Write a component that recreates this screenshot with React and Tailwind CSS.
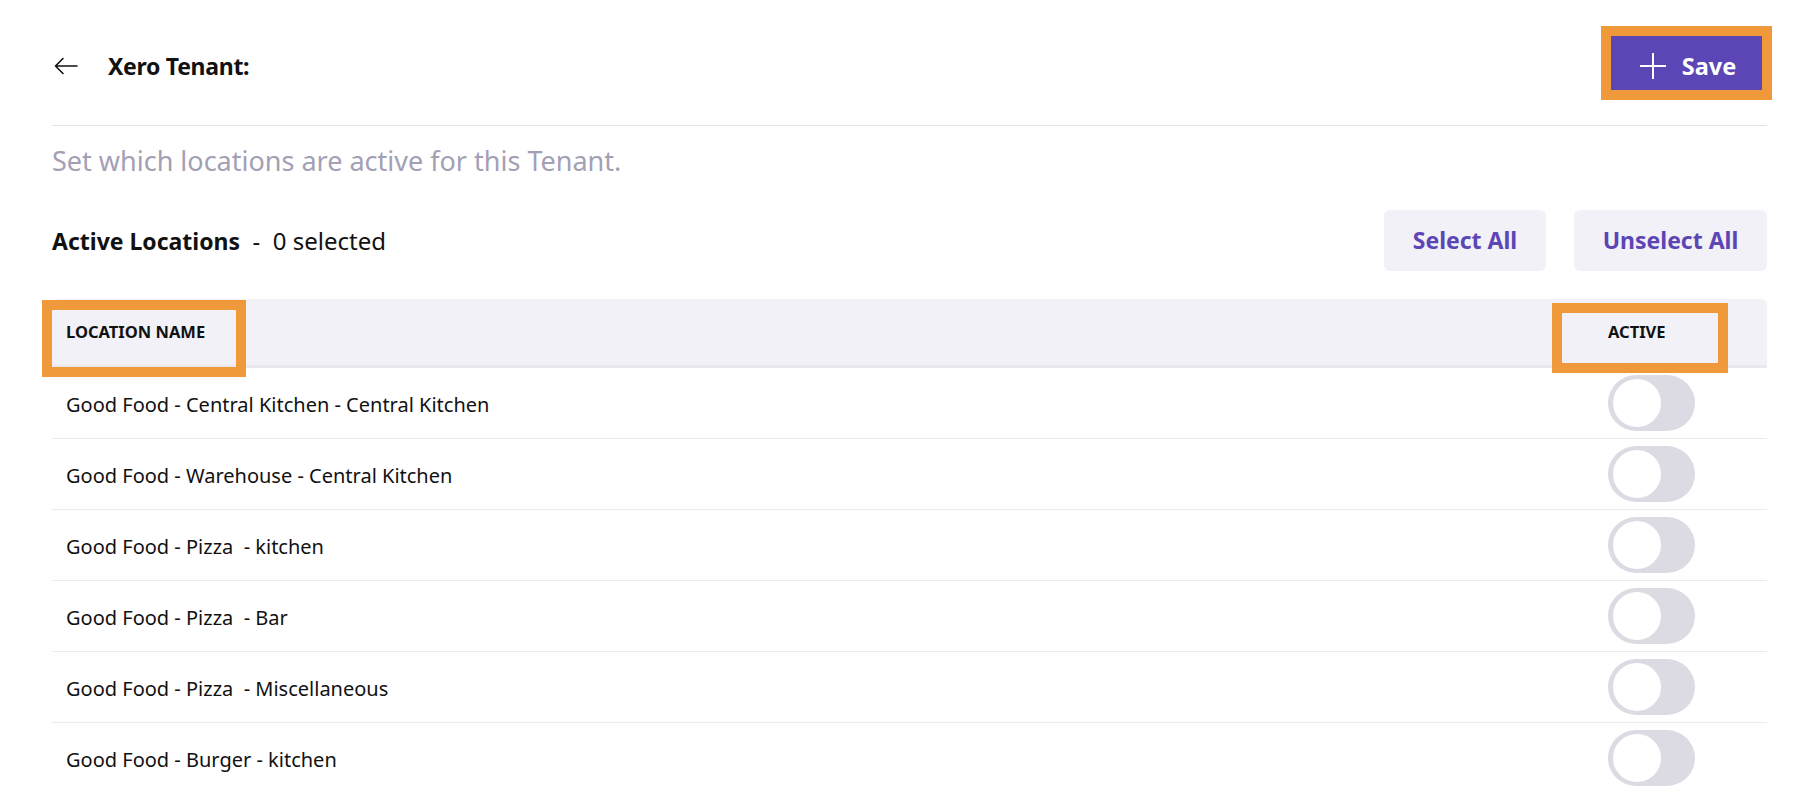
import React from "react";

const rows = [
  "Good Food - Central Kitchen - Central Kitchen",
  "Good Food - Warehouse - Central Kitchen",
  "Good Food - Pizza  - kitchen",
  "Good Food - Pizza  - Bar",
  "Good Food - Pizza  - Miscellaneous",
  "Good Food - Burger - kitchen",
];

function Toggle() {
  return (
    <div className="relative h-[56px] w-[87px] rounded-full bg-[#dcdbe4]">
      <div className="absolute left-[5px] top-[4px] h-[48px] w-[48px] rounded-full bg-white" />
    </div>
  );
}

export default function App() {
  return (
    <div
      className="min-h-screen w-full bg-white pl-[52px] pr-[49px] text-[#111111]"
      style={{ fontFamily: '"Noto Sans", "Open Sans", sans-serif' }}
    >
      <div className="flex items-center justify-between pt-[36px]">
        <div className="mt-[6px] flex items-center">
          <svg width="24" height="18" viewBox="0 0 24 18" fill="none" className="ml-[2px]">
            <path d="M23 9H1.5M9 1.5L1.5 9L9 16.5" stroke="#111" strokeWidth="1.6" strokeLinecap="round" strokeLinejoin="round" />
          </svg>
          <span className="ml-[30px] text-[23px] font-bold tracking-[-0.3px]">Xero Tenant:</span>
        </div>
        <button className="mr-[5px] flex h-[54px] w-[151px] items-center justify-center gap-[15px] bg-[#5c45b5] pl-[2px] pt-[6px] text-white outline-[10px] outline-solid outline-[#f0993a]">
          <svg width="28" height="28" viewBox="0 0 28 28" fill="none">
            <path d="M14 1V27M1 14H27" stroke="white" strokeWidth="2" />
          </svg>
          <span className="text-[23.5px] font-bold leading-[28px]">Save</span>
        </button>
      </div>
      <div className="mt-[35px] h-px bg-[#e2e2e6]" />
      <p className="mt-[19px] text-[27px] leading-[32px] text-[#a3a0b5]">
        Set which locations are active for this Tenant.
      </p>
      <div className="mt-[33px] flex items-center justify-between">
        <div className="whitespace-pre text-[23px]">
          <span className="font-bold">Active Locations</span>
          <span className="text-[24px]">{"  -  0 selected"}</span>
        </div>
        <div className="flex gap-[28px]">
          <button className="h-[61px] w-[162px] rounded-[6px] bg-[#f2f1f7] text-[23px] font-bold text-[#5c45b5]">
            Select All
          </button>
          <button className="h-[61px] w-[193px] rounded-[6px] bg-[#f2f1f7] text-[23px] font-bold text-[#5c45b5]">
            Unselect All
          </button>
        </div>
      </div>
      <div className="relative mt-[28px]">
        <div className="flex h-[69px] items-start rounded-t-[6px] border-b-[3px] border-[#e9e8ef] bg-[#f2f1f7] pt-[22px]">
          <div className="flex-1 pl-[14px] text-[16.5px] font-bold uppercase leading-[22px]">Location Name</div>
          <div className="w-[159px] text-[16.5px] font-bold uppercase leading-[22px]">Active</div>
        </div>
        {rows.map((r) => (
          <div key={r} className="flex h-[71px] items-center border-b border-[#ebebef]">
            <div className="flex-1 whitespace-pre pl-[14px] pt-[4px] text-[20px]">{r}</div>
            <div className="w-[159px]">
              <Toggle />
            </div>
          </div>
        ))}
        <div className="absolute left-[-10px] top-[1px] h-[77px] w-[204px] border-[10px] border-[#f0993a]" />
        <div className="absolute right-[39px] top-[4px] h-[70px] w-[176px] border-[10px] border-[#f0993a]" />
      </div>
    </div>
  );
}
